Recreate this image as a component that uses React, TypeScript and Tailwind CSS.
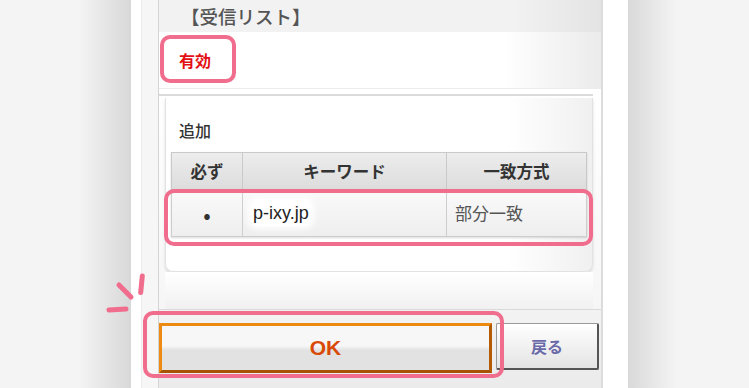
const jp = "font-['Noto_Sans_CJK_JP',sans-serif]";

function Highlight({ className }: { className: string }) {
  return (
    <div
      className={`pointer-events-none absolute rounded-[10px] border-[4px] border-[#f06d8d] ${className}`}
    />
  );
}

export default function App() {
  return (
    <div className={`relative flex h-[388px] w-[749px] overflow-hidden ${jp}`}>
      {/* backdrop left */}
      <div className="w-[131px] shrink-0 bg-linear-to-r from-[#f4f4f4] from-60% to-[#d8d8d8]" />

      {/* phone screen */}
      <div className="flex w-[497px] shrink-0 bg-white pl-[10px] pr-[25px]">
        <div className="flex flex-1 flex-col border-l border-r-2 border-l-[#ececec] border-r-[#dcdcdc] bg-[#f6f6f6] pl-[16px]">
          <div className="flex flex-1 flex-col border-l border-[#d4d4d4]">
            {/* header */}
            <div className="flex h-[32px] items-center bg-linear-to-r from-[#f2f2f2] from-80% to-[#e4e4e4] pl-[22px] text-[18.5px] font-medium leading-none text-[#555]">
              【受信リスト】
            </div>

            {/* status row */}
            <div className="flex h-[56px] items-center bg-linear-to-r from-white from-78% to-[#ebebeb] pl-[20px] text-[16px] font-bold text-[#e30f12]">
              有効
            </div>

            {/* separator */}
            <div className="h-[10px] border-t border-[#ececec] bg-white pt-[5px] pr-[8px]">
              <div className="h-[2px] bg-[#dadada]" />
            </div>

            {/* add section */}
            <div className="bg-linear-to-b from-white to-[#f6f6f6] pl-[6px] pr-[8px]">
              <div className="h-[174px] rounded-b-[8px] border-x border-b border-[#e2e2e2] bg-linear-to-r from-white from-80% to-[#f0f0f0] pt-[21px] shadow-[0_2px_3px_rgba(0,0,0,0.12)]">
                <div className="pl-[13px] text-[16px] font-medium leading-[22px] text-[#333]">追加</div>
                <table className="mx-[5px] mt-[11px] w-[416px] border-collapse text-[#333] shadow-[0_1px_2px_rgba(0,0,0,0.15)]">
                  <thead>
                    <tr className="h-[37px] bg-linear-to-b from-[#ededed] to-[#dcdcdc] text-[16.5px] font-bold">
                      <th className="w-[71px] border border-[#c9c9c9] font-bold">必ず</th>
                      <th className="w-[204px] border border-[#c9c9c9] font-bold">キーワード</th>
                      <th className="border border-[#c9c9c9] font-bold">一致方式</th>
                    </tr>
                  </thead>
                  <tbody>
                    <tr className="h-[47px] bg-linear-to-b from-[#fafafa] to-[#eeeeee]">
                      <td className="border border-[#cdcdcd] text-center text-[22px] leading-none text-[#333]">•</td>
                      <td className="border border-[#cdcdcd] pl-[8px] font-['Liberation_Sans','Noto_Sans_CJK_JP',sans-serif] text-[18px] text-[#222]">
                        <span className="rounded-[6px] bg-white px-[2px] py-[3px] shadow-[0_0_6px_3px_#ffffff]">p-ixy.jp</span>
                      </td>
                      <td className="border border-[#cdcdcd] pl-[8px] text-[17px] text-[#555]">部分一致</td>
                    </tr>
                  </tbody>
                </table>
              </div>
              <div className="h-[37px] bg-linear-to-b from-white to-[#f1f1f1]" />
            </div>

            {/* buttons */}
            <div className="flex flex-1 gap-[4px] border-t border-[#d9d9d9] bg-linear-to-b from-[#f3f3f3] to-[#ebebeb] pt-[13px] pr-[2px]">
              <button className="flex h-[50px] w-[333px] items-center justify-center border-[3px] border-[#ec8a12] border-r-[#b45c05] border-b-[#a65404] bg-linear-to-b from-[#f7f7f7] from-45% to-[#e2e2e2] to-55% font-['Liberation_Sans',sans-serif] text-[21px] font-bold text-[#d84a06]">
                OK
              </button>
              <button className="flex h-[47px] flex-1 items-center justify-center rounded-[2px] border border-r-2 border-b-2 border-[#9a9a9a] border-r-[#555] border-b-[#555] bg-linear-to-b from-white to-[#e4e4e4] text-[16px] font-bold text-[#6a6aa9]">
                戻る
              </button>
            </div>
          </div>
        </div>
      </div>

      {/* backdrop right */}
      <div className="flex-1 bg-linear-to-r from-[#d9d9d9] to-[#f4f4f4] to-40%" />

      {/* annotations */}
      <Highlight className="left-[160px] top-[35px] h-[48px] w-[76px]" />
      <Highlight className="left-[164px] top-[189px] h-[57px] w-[429px]" />
      <Highlight className="left-[143px] top-[311px] h-[67px] w-[361px]" />
      <svg className="absolute left-[100px] top-[268px]" width="50" height="50" viewBox="0 0 50 50">
        <g stroke="#f06d8d" strokeWidth="5" strokeLinecap="round">
          <line x1="42.3" y1="8" x2="40.7" y2="24.5" />
          <line x1="19" y1="17" x2="31" y2="29" />
          <line x1="9" y1="42" x2="26" y2="41" />
        </g>
      </svg>
    </div>
  );
}
